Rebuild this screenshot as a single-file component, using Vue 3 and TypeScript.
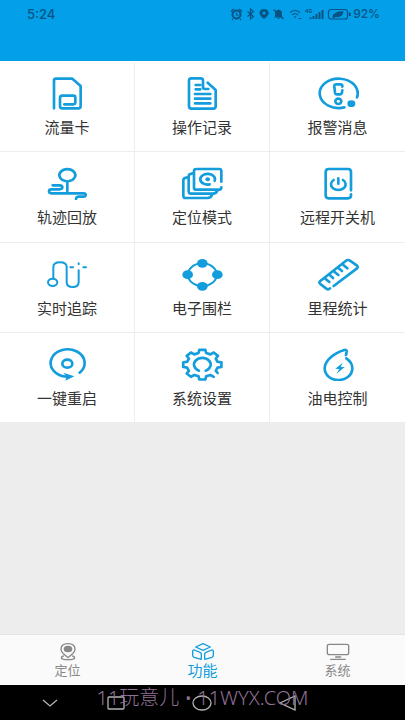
<script setup lang="ts">
import { ref } from 'vue'

interface Feature {
  label: string
  /** Stroked outlines, drawn in a 126 x 102 box */
  lines: string[]
  /** Filled shapes, same box */
  fills?: string[]
  width?: number
}

const ellipse = (cx: number, cy: number, rx: number, ry: number): string =>
  `M${cx - rx} ${cy}a${rx} ${ry} 0 1 1 ${rx * 2} 0a${rx} ${ry} 0 1 1 ${-rx * 2} 0z`

// Cog outline with eight teeth, left open at the lower right
function gearPath(): string {
  const point = (deg: number, rx: number, ry: number) => {
    const a = (deg * Math.PI) / 180
    return `${(64 + rx * Math.cos(a)).toFixed(1)} ${(53 + ry * Math.sin(a)).toFixed(1)}`
  }
  const points: string[] = []
  for (let i = 1; i <= 8; i++) {
    const mid = i * 45
    if (i > 1) points.push(point(mid - 14, 47, 36), point(mid - 9, 58, 45))
    points.push(point(mid + 9, 58, 45))
    points.push(point(mid + 14, 47, 36))
  }
  points.push(point(391, 47, 36), point(395, 56, 43))
  return 'M' + points.join('L')
}

const features: Feature[] = [
  {
    label: '流量卡',
    lines: ['M24 97V14q0-6 6-6h49l25 22v60q0 7-7 7H49q-7 0-7-7V66q0-7 7-7h33q6 0 6 6v14q0 6-6 6H55'],
  },
  {
    label: '操作记录',
    lines: [
      'M80 20l24 22v49q0 7-7 7H31q-7 0-7-7V14q0-7 7-7h28q7 0 7 7v19q0 6 6 6h10',
      'M44 27h14M44 40h14M42 54h46M42 68h46M42 82h46',
    ],
  },
  {
    label: '报警消息',
    lines: [
      'M82 94A57 44 0 1 1 120 64',
      'M76 43l-1 6q-1 6-6 6h-9q-5 0-6-5l-2-18q-1-7 6-7h12q7 0 6 7',
      ellipse(64, 76, 9, 8),
    ],
    fills: [ellipse(103, 83, 12, 10)],
  },
  {
    label: '轨迹回放',
    lines: [
      'M58 45A24 18 0 1 1 70 45M64 46V76',
      'M20 58h20q9 0 9 6t-9 6H17q-8 0-8 6t8 6h96q6 0 6 5t-7 5H99q-8 0-9 7',
    ],
  },
  {
    label: '定位模式',
    lines: [
      'M121 47V15q0-6-6-6H46q-7 0-7 6v50q0 6 7 6h69q6 0 6-7',
      'M36 22q-13 1-13 8v46q0 7 7 7h66q10 0 14-10',
      'M20 34Q7 35 7 42v47q0 7 7 7h66q10 0 14-11',
      'M86 55A22 16 0 1 1 101 44',
    ],
    fills: [ellipse(80, 40, 7, 6)],
  },
  {
    label: '远程开关机',
    lines: [
      'M102 73V18q0-9-9-9H35q-9 0-9 9v70q0 9 9 9h58q9 0 9-9v-3',
      'M50 42A22 17 0 1 0 78 42M64 37V53',
    ],
  },
  {
    label: '实时追踪',
    width: 6,
    lines: [
      ellipse(20, 76, 14, 11),
      'M22 64V30q0-14 20-14t20 14v45q0 15 18 15t18-15V40M98 19v3M73 31h8M112 31h8',
    ],
  },
  {
    label: '电子围栏',
    width: 6,
    lines: [ellipse(64, 53, 43, 34)],
    fills: [ellipse(64, 19, 16, 13), ellipse(64, 88, 16, 13), ellipse(20, 53, 16, 13), ellipse(109, 53, 16, 13)],
  },
  {
    label: '里程统计',
    lines: [
      'M50 87L119 35q6-5 0-10L99 11q-7-4-12 0L10 72q-6 5 0 9l18 14q6 4 11-1',
      'M25 65l12 10M39 55l9 8M52 44l12 10M65 34l10 8M79 24l12 10',
    ],
  },
  {
    label: '一键重启',
    lines: ['M101 77A51 41 0 1 0 62 89', ellipse(64, 50, 15, 12)],
    fills: ['M52 77L85 88L58 101L62 89z'],
  },
  {
    label: '系统设置',
    lines: [gearPath(), 'M54 71A25 20 0 1 1 74 71'],
  },
  {
    label: '油电控制',
    lines: ['M87 24L89 14q1-6-7-5C50 18 23 42 23 64c0 20 18 35 41 35s42-14 42-35c0-12-6-22-18-30'],
    fills: ['M77 47L55 65L67 66L58 81L83 60L71 60z'],
  },
]

interface Tab {
  label: string
  lines: string
  fill?: string
}

const tabs: Tab[] = [
  {
    label: '定位',
    lines: 'M36 47C24 38 15 32 15 22C15 11 24 5 36 5s21 6 21 17c0 10-9 16-21 25zM22 42q-6 2-6 5 0 6 20 6t20-6q0-3-6-5',
    fill: ellipse(36, 21, 13, 10),
  },
  {
    label: '功能',
    lines: 'M36 5L58 15L36 25L14 15zM10 24L27 31Q31 33 31 37V52L9 46Q5 44 5 40V28Q5 23 10 24zM62 24L45 31Q41 33 41 37V52L63 46Q67 44 67 40V28Q67 23 62 24z',
  },
  {
    label: '系统',
    lines: 'M10 7H62Q68 7 68 12V33Q68 38 62 38H10Q4 38 4 33V12Q4 7 10 7zM29 45H44M14 52H58',
  },
]

const active = ref(1)
</script>

<template>
  <div class="screen">
    <header class="top">
      <div class="status">
        <span class="time">5:24</span>
        <div class="signals">
          <svg class="s15" viewBox="0 0 15 14" aria-hidden="true">
            <circle cx="6.5" cy="7.5" r="4" fill="none" stroke="currentColor" stroke-width="2" />
            <path d="M1 4.500L4 2M12 4.500L9 2M6.500 5.500V8H8.500M3 12l-1 1M10 12l1 1" class="line" />
          </svg>
          <svg class="s12" viewBox="0 0 12 14" aria-hidden="true">
            <path d="M2.500 4.500L8.500 9.500L5.500 12V2L8.500 4.500L2.500 9.500" class="line" />
          </svg>
          <svg class="s14" viewBox="0 0 14 14" aria-hidden="true">
            <path fill="currentColor" fill-rule="evenodd" d="M7 2C4.500 2 2.500 3.700 2.500 5.900C2.500 8.500 5.500 10.500 7 12C8.500 10.500 11.700 8.500 11.700 5.900C11.700 3.700 9.500 2 7 2zM7 4.500a1.500 1.500 0 1 1 0 3a1.500 1.500 0 1 1 0-3z" />
          </svg>
          <svg class="s16" viewBox="0 0 16 14" aria-hidden="true">
            <path fill="currentColor" d="M4 9.500V6C4 4 5.500 3 7.500 2.500C9.500 3 11 4 11 6V9.500L12 10.500H3zM6 11.200H9Q7.500 13 6 11.200z" />
            <path d="M2.500 2.500L12.500 12" class="line" />
          </svg>
          <svg class="s16" viewBox="0 0 16 14" aria-hidden="true">
            <path d="M3 5.500Q8 1.500 13 5.500M5 8Q8 5.500 11 8M7 10.200Q8 9.500 9 10.200M11.500 11.500h3" class="line" />
          </svg>
          <svg class="s23" viewBox="0 0 23 14" aria-hidden="true">
            <text x="2" y="6" font-size="5" font-weight="700" fill="currentColor">4G</text>
            <path d="M7.500 12V10.500M10.500 12V9M13.500 12V7M16.500 12V5M19.500 12V3" class="line bars" />
          </svg>
          <svg class="s27" viewBox="0 0 27 14" aria-hidden="true">
            <rect x="2.500" y="2.500" width="19" height="9.500" rx="2.500" class="line" />
            <path fill="currentColor" d="M6.500 10.500Q6 4.500 17.500 4Q17 11 9.500 10L7.500 11.500z" />
            <path d="M23.800 5.500v3.500" class="line bars" />
          </svg>
          <span class="battery">92%</span>
        </div>
      </div>
    </header>

    <main class="body">
      <div class="grid">
        <button v-for="item in features" :key="item.label" type="button" class="cell">
          <svg class="icon" viewBox="0 0 126 102" :stroke-width="item.width ?? 8" aria-hidden="true">
            <path v-for="(d, i) in item.lines" :key="'l' + i" :d="d" class="outline" />
            <path v-for="(d, i) in item.fills ?? []" :key="'f' + i" :d="d" fill="currentColor" />
          </svg>
          <span class="label">{{ item.label }}</span>
        </button>
      </div>
    </main>

    <nav class="tabs">
      <button
        v-for="(tab, i) in tabs"
        :key="tab.label"
        type="button"
        class="tab"
        :class="{ active: active === i }"
        @click="active = i"
      >
        <svg class="tab-icon" viewBox="0 0 72 60" stroke-width="4" aria-hidden="true">
          <path :d="tab.lines" class="outline" />
          <path v-if="tab.fill" :d="tab.fill" fill="currentColor" />
        </svg>
        <span class="tab-label">{{ tab.label }}</span>
      </button>
    </nav>

    <footer class="system">
      <button type="button" class="key" aria-label="收起">
        <svg class="key-icon" viewBox="0 0 20 16"><path d="M3 5l7 6l7-6" class="key-line" /></svg>
      </button>
      <button type="button" class="key" aria-label="最近任务">
        <svg class="key-icon" viewBox="0 0 20 16"><rect x="2" y="2" width="16" height="12" rx="1" class="key-line" /></svg>
      </button>
      <button type="button" class="key" aria-label="主页">
        <svg class="key-icon" viewBox="0 0 20 16"><ellipse cx="10" cy="8" rx="9" ry="7" class="key-line" /></svg>
      </button>
      <button type="button" class="key" aria-label="返回">
        <svg class="key-icon" viewBox="0 0 20 16"><path d="M2 8L17 1V15z" class="key-line" /></svg>
      </button>
      <span class="watermark">11玩意儿 • 11WYX.COM</span>
    </footer>
  </div>
</template>

<style>
body {
  background: #000;
}
</style>

<style scoped>
.screen {
  min-height: 100vh;
  display: flex;
  flex-direction: column;
  font-family: "Noto Sans CJK SC", sans-serif;
}

button {
  margin: 0;
  padding: 0;
  border: 0;
  background: none;
  font: inherit;
  color: inherit;
}

.top {
  height: 61px;
  flex: none;
  background: #039fe9;
}

.status {
  display: flex;
  align-items: center;
  justify-content: space-between;
  padding: 7px 25px 0 27px;
  color: #075482;
  font-family: Inter, sans-serif;
  font-weight: 500;
  line-height: 14px;
}

.time {
  font-size: 13px;
}

.signals {
  display: flex;
  align-items: center;
}

.signals svg {
  height: 14px;
}

.s12 { width: 12px; }
.s14 { width: 14px; }
.s15 { width: 15px; }
.s16 { width: 16px; }
.s23 { width: 23px; }
.s27 { width: 27px; }

.battery {
  font-size: 12px;
}

.line {
  fill: none;
  stroke: currentColor;
  stroke-width: 1.2;
}

.bars {
  stroke-width: 2;
}

.body {
  flex: 1;
  background: #ededed;
}

.grid {
  height: 361px;
  display: grid;
  grid-template-columns: repeat(3, 1fr);
  grid-template-rows: repeat(4, 1fr);
  padding-top: 1px;
  background: #fff;
}

.cell {
  display: flex;
  flex-direction: column;
  align-items: center;
  gap: 7px;
  padding-top: 14px;
  border-right: 1px solid #ededed;
  border-bottom: 1px solid #ededed;
  color: #139ddc;
}

.cell:nth-child(3n) {
  border-right: 0;
}

.icon {
  width: 42px;
  height: 34px;
  flex: none;
}

.outline {
  fill: none;
  stroke: currentColor;
  stroke-linecap: round;
  stroke-linejoin: round;
}

.label {
  font-size: 15px;
  line-height: 20px;
  color: #333;
}

.tabs {
  height: 51px;
  flex: none;
  display: grid;
  grid-template-columns: repeat(3, 1fr);
  box-sizing: border-box;
  border-top: 1px solid #e4e4e4;
  background: #fafafa;
}

.tab {
  display: flex;
  flex-direction: column;
  align-items: center;
  padding-top: 7px;
  color: #888;
}

.tab-icon {
  width: 24px;
  height: 20px;
}

.tab-label {
  font-size: 13px;
  line-height: 16px;
}

.tab.active {
  color: #139ddc;
}

.tab.active .tab-label {
  font-size: 15px;
}

.system {
  position: relative;
  height: 35px;
  flex: none;
  display: grid;
  grid-template-columns: 46fr 86fr 86fr 86fr;
  padding: 0 74px 0 27px;
  background: #000;
}

.key {
  display: flex;
  align-items: center;
  justify-content: center;
}

.key-icon {
  width: 20px;
  height: 16px;
}

.key-line {
  fill: none;
  stroke: #b5b5b5;
  stroke-width: 1.3;
}

.watermark {
  position: absolute;
  inset: 0;
  text-align: center;
  font-family: "Noto Sans", "Noto Sans CJK SC", sans-serif;
  font-size: 20px;
  font-weight: 300;
  line-height: 26px;
  white-space: nowrap;
  color: #8f7193;
  pointer-events: none;
}
</style>
